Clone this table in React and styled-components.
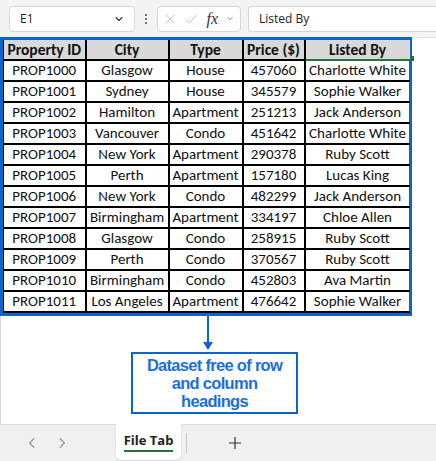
import React from "react";
import styled, { createGlobalStyle } from "styled-components";

const rows = [
  ["PROP1000", "Glasgow", "House", "457060", "Charlotte White"],
  ["PROP1001", "Sydney", "House", "345579", "Sophie Walker"],
  ["PROP1002", "Hamilton", "Apartment", "251213", "Jack Anderson"],
  ["PROP1003", "Vancouver", "Condo", "451642", "Charlotte White"],
  ["PROP1004", "New York", "Apartment", "290378", "Ruby Scott"],
  ["PROP1005", "Perth", "Apartment", "157180", "Lucas King"],
  ["PROP1006", "New York", "Condo", "482299", "Jack Anderson"],
  ["PROP1007", "Birmingham", "Apartment", "334197", "Chloe Allen"],
  ["PROP1008", "Glasgow", "Condo", "258915", "Ruby Scott"],
  ["PROP1009", "Perth", "Condo", "370567", "Ruby Scott"],
  ["PROP1010", "Birmingham", "Condo", "452803", "Ava Martin"],
  ["PROP1011", "Los Angeles", "Apartment", "476642", "Sophie Walker"],
];

const headers = ["Property ID", "City", "Type", "Price ($)", "Listed By"];
const widths = [82, 83, 74, 62, 105];

const GlobalStyle = createGlobalStyle`
  body {
    margin: 0;
    background: #fff;
  }
`;

const Page = styled.div`
  width: 436px;
  height: 461px;
  display: flex;
  flex-direction: column;
  overflow: hidden;
  font-family: "Open Sans", "Noto Sans", sans-serif;
`;

const TopBar = styled.div`
  height: 37px;
  background: #f3f3f3;
  display: flex;
  align-items: center;
  padding: 0 0 0 9px;
  box-sizing: border-box;
  flex-shrink: 0;
`;

const Field = styled.div`
  height: 26px;
  width: ${(p) => p.$w};
  flex: ${(p) => p.$grow || "none"};
  background: #fff;
  border: 1px solid #d6d6d6;
  border-right: ${(p) => (p.$open ? "none" : "1px solid #d6d6d6")};
  border-radius: ${(p) => (p.$open ? "4px 0 0 4px" : "4px")};
  box-sizing: border-box;
  display: flex;
  align-items: center;
  padding: 0 ${(p) => p.$pad || "10px"};
  gap: ${(p) => p.$gap || "0"};
  font-size: 12px;
  color: #222;
`;

const Grow = styled.span`
  flex: 1;
`;

const Dots = styled.div`
  width: 22px;
  display: flex;
  flex-direction: column;
  align-items: center;
  gap: 2px;
  span {
    width: 2px;
    height: 2px;
    background: #444;
    border-radius: 1px;
  }
`;

const Fx = styled.span`
  font-family: "Liberation Serif", serif;
  font-style: italic;
  font-size: 16px;
  color: #333;
`;

const Sheet = styled.div`
  flex: 1;
  position: relative;
  border-top: 1px solid #e3e3e3;
  border-left: 1px solid #d8d8d8;
  display: flex;
  flex-direction: column;
`;

const TableFrame = styled.div`
  position: relative;
  width: 412px;
  border: 3px solid #0b66cc;
  box-sizing: border-box;
  margin-left: -1px;
  margin-top: -1px;
`;

const Table = styled.table`
  border-collapse: collapse;
  table-layout: fixed;
  width: 100%;
  font-family: Calibri, Carlito, "Liberation Sans", sans-serif;
  font-size: 15px;
  color: #111;
`;

const Cell = styled.td`
  height: 19px;
  padding: 0;
  text-align: center;
  white-space: nowrap;
  overflow: hidden;
  border: 2px solid #000;
  border-top: ${(p) => (p.$first ? "none" : "2px solid #000")};
  line-height: 19px;
  &:first-child {
    border-left: 1px solid #000;
  }
  &:last-child {
    border-right: none;
  }
`;

const HeadCell = styled(Cell).attrs({ as: "th" })`
  background: #d9d9d9;
  font-weight: bold;
  font-size: 15.5px;
  height: 18px;
  border-top: none;
  ${(p) =>
    p.$active &&
    `
    border-left: 2px solid #217346;
    border-bottom: 2px solid #217346;
  `}
`;

const Handle = styled.div`
  position: absolute;
  right: -5px;
  top: 16px;
  width: 4px;
  height: 5px;
  background: #217346;
`;

const Callout = styled.div`
  display: flex;
  flex-direction: column;
  align-items: flex-start;
`;

const Stem = styled.div`
  margin-left: 206px;
  width: 2px;
  height: 26px;
  background: #0b66cc;
`;

const Head = styled.svg`
  margin-left: 202px;
  display: block;
`;

const Box = styled.div`
  margin-left: 130px;
  margin-top: 2px;
  width: 167px;
  height: 62px;
  border: 2px solid #0b66cc;
  box-sizing: border-box;
  display: flex;
  align-items: center;
  justify-content: center;
  text-align: center;
  font-family: "Liberation Sans", Arial, sans-serif;
  font-weight: bold;
  font-size: 16.5px;
  line-height: 18px;
  letter-spacing: -0.7px;
  color: #1a6fdc;
`;

const TabBar = styled.div`
  height: 37px;
  flex-shrink: 0;
  background: #f0f0f0;
  border-top: 1px solid #dcdcdc;
  box-sizing: border-box;
  display: flex;
  align-items: stretch;
`;

const Nav = styled.div`
  width: 116px;
  display: flex;
  align-items: center;
  padding-left: 26px;
  gap: 18px;
  box-sizing: border-box;
`;

const Tab = styled.div`
  width: 65px;
  margin-top: -1px;
  margin-bottom: 1px;
  background: #fff;
  border-radius: 0 0 5px 5px;
  box-shadow: 0 1px 2px rgba(0, 0, 0, 0.12);
  display: flex;
  align-items: center;
  justify-content: center;
  span {
    font-family: "Open Sans", sans-serif;
    font-weight: bold;
    font-size: 13px;
    color: #222;
    padding-bottom: 2px;
    border-bottom: 2px solid #217346;
    line-height: 15px;
  }
`;

const Sep = styled.div`
  width: 1px;
  background: #c8c8c8;
  margin: 8px 0 8px 5px;
`;

const Plus = styled.div`
  margin-left: 41px;
  display: flex;
  align-items: center;
`;

const Chevron = ({ d, color = "#555", size = 10 }) => (
  <svg width={size} height={size} viewBox="0 0 10 10" fill="none">
    <path d={d} stroke={color} strokeWidth="1.1" strokeLinecap="round" strokeLinejoin="round" />
  </svg>
);

export default function App() {
  return (
    <Page>
      <GlobalStyle />
      <TopBar>
        <Field $w="126px">
          <Grow>E1</Grow>
          <Chevron d="M2 3.5 L5 6.5 L8 3.5" color="#333" />
        </Field>
        <Dots>
          <span />
          <span />
          <span />
        </Dots>
        <Field $w="84px" $pad="6px" $gap="8px">
          <svg width="14" height="14" viewBox="0 0 14 14">
            <path d="M2 2 L12 12 M12 2 L2 12" stroke="#bbb" strokeWidth="1.1" />
          </svg>
          <svg width="16" height="14" viewBox="0 0 16 14">
            <path d="M1.5 7 L6 11.5 L14.5 2" stroke="#bbb" strokeWidth="1.1" fill="none" />
          </svg>
          <Fx>fx</Fx>
          <Chevron d="M2 3.5 L5 6.5 L8 3.5" color="#777" size={9} />
        </Field>
        <Field $grow="1" $open style={{ marginLeft: 7 }}>
          Listed By
        </Field>
      </TopBar>
      <Sheet>
        <TableFrame>
          <Table>
            <colgroup>
              {widths.map((w, i) => (
                <col key={i} style={{ width: w }} />
              ))}
            </colgroup>
            <thead>
              <tr>
                {headers.map((h, i) => (
                  <HeadCell key={h} $active={i === 4}>
                    {h}
                  </HeadCell>
                ))}
              </tr>
            </thead>
            <tbody>
              {rows.map((r, ri) => (
                <tr key={r[0]}>
                  {r.map((c, ci) => (
                    <Cell key={ci} $first={ri === 0}>
                      {c}
                    </Cell>
                  ))}
                </tr>
              ))}
            </tbody>
          </Table>
          <Handle />
        </TableFrame>
        <Callout>
          <Stem />
          <Head width="10" height="8" viewBox="0 0 10 8">
            <path d="M0 0 L10 0 L5 8 Z" fill="#0b66cc" />
          </Head>
          <Box>
            Dataset free of row
            <br />
            and column
            <br />
            headings
          </Box>
        </Callout>
      </Sheet>
      <TabBar>
        <Nav>
          <Chevron d="M6.5 1.5 L3 5 L6.5 8.5" color="#999" size={12} />
          <Chevron d="M3.5 1.5 L7 5 L3.5 8.5" color="#999" size={12} />
        </Nav>
        <Tab>
          <span>File Tab</span>
        </Tab>
        <Sep />
        <Plus>
          <svg width="14" height="14" viewBox="0 0 14 14">
            <path d="M7 1 V13 M1 7 H13" stroke="#333" strokeWidth="1.2" />
          </svg>
        </Plus>
      </TabBar>
    </Page>
  );
}
